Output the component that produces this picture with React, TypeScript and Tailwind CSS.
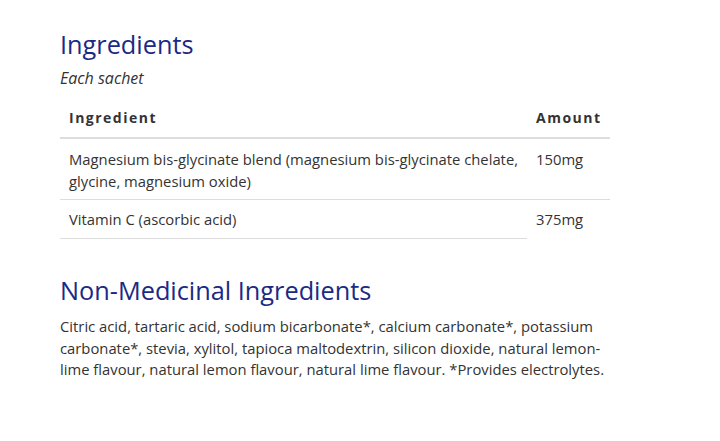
import React from "react";

export default function App() {
  return (
    <div className="w-[720px] h-[441px] bg-white text-[#333333]" style={{ fontFamily: '"Open Sans", sans-serif' }}>
      <div className="pl-[60px] pt-[26px] w-[610px]">
        <h2 className="text-[25.3px] leading-[36px] text-[#1b2a84] font-normal">Ingredients</h2>
        <p className="italic text-[16px] leading-[22px] mt-[5px]">Each sachet</p>
        <table className="w-[550px] mt-[12px] border-collapse text-[14.8px] leading-[22px]">
          <thead>
            <tr>
              <th className="text-left font-bold text-[14px] tracking-[1.5px] pl-[9px] pr-[4px] pt-[6px] pb-[8px] border-b-2 border-[#dddddd]">Ingredient</th>
              <th className="text-left font-bold text-[14px] tracking-[1.5px] pl-[9px] pr-[4px] pt-[6px] pb-[8px] border-b-2 border-[#dddddd] w-[83px]">Amount</th>
            </tr>
          </thead>
          <tbody>
            <tr>
              <td className="align-top pl-[9px] pr-[4px] pt-[9px] pb-[7px] border-b border-[#dddddd]">Magnesium bis-glycinate blend (magnesium bis-glycinate chelate, glycine, magnesium oxide)</td>
              <td className="align-top pl-[9px] pr-[4px] pt-[9px] pb-[7px] border-b border-[#dddddd]">150mg</td>
            </tr>
            <tr>
              <td className="align-top pl-[9px] pr-[4px] pt-[8px] pb-[8px] border-b border-[#dddddd]">Vitamin C (ascorbic acid)</td>
              <td className="align-top pl-[9px] pr-[4px] pt-[8px] pb-[8px]">375mg</td>
            </tr>
          </tbody>
        </table>
        <h2 className="text-[25.3px] leading-[36px] text-[#1b2a84] font-normal mt-[33px]">Non-Medicinal Ingredients</h2>
        <p className="text-[14.8px] leading-[21.5px] mt-[8px]">
          Citric acid, tartaric acid, sodium bicarbonate*, calcium carbonate*, potassium carbonate*, stevia, xylitol, tapioca maltodextrin, silicon dioxide, natural lemon-lime flavour, natural lemon flavour, natural lime flavour. *Provides electrolytes.
        </p>
      </div>
    </div>
  );
}
